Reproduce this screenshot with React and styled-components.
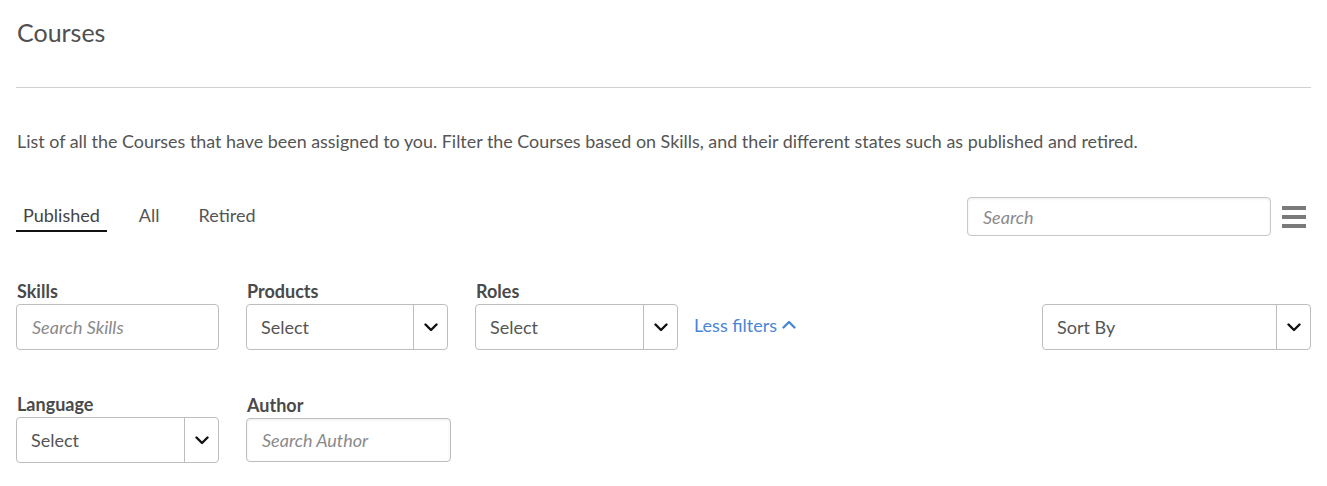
import React from 'react'
import styled, { createGlobalStyle } from 'styled-components'

const GlobalStyle = createGlobalStyle`
  body {
    margin: 0;
    background: #fff;
    font-family: Lato, "Liberation Sans", sans-serif;
    color: #555;
  }
`

const Page = styled.div`
  padding: 16px 16px 0 16px;
`

const Title = styled.h1`
  margin: 0;
  font-size: 25px;
  line-height: 32px;
  font-weight: 400;
  color: #505050;
  padding-left: 1px;
`

const Rule = styled.hr`
  margin: 39px 0 0 0;
  border: none;
  border-top: 1px solid #d0d0d0;
`

const Description = styled.p`
  margin: 41px 0 0 1px;
  font-size: 17.9px;
  line-height: 24px;
  color: #555;
`

const Toolbar = styled.div`
  display: flex;
  align-items: center;
  height: 39px;
  margin-top: 44px;
`

const Tabs = styled.div`
  display: flex;
  align-self: stretch;
  align-items: flex-end;
  gap: 25px;
  padding-bottom: 4px;
`

const Tab = styled.div`
  padding: 0 7px 3px;
  font-size: 18px;
  line-height: 24px;
  color: ${p => (p.$active ? '#444' : '#555')};
  border-bottom: 2px solid ${p => (p.$active ? '#111' : 'transparent')};
  cursor: pointer;
`

const SearchBox = styled.div`
  margin-left: auto;
  height: 37px;
  border: 1px solid #c8c8c8;
  border-radius: 4px;
  box-shadow: inset 0 1px 3px rgba(0, 0, 0, 0.08);
  display: flex;
  align-items: center;
  padding: 0 15px;
  box-sizing: content-box;
  width: 272px;
`

const Placeholder = styled.span`
  font-style: italic;
  font-size: 18px;
  color: #8a8a8a;
`

const MenuButton = styled.div`
  display: flex;
  flex-direction: column;
  gap: 5px;
  margin-left: 11px;
  margin-right: 5px;
  width: 24px;
`

const Bar = styled.span`
  display: block;
  height: 4px;
  background: #7a7a7a;
`

const FilterRow = styled.div`
  display: flex;
  align-items: flex-end;
  gap: 27px;
  margin-top: ${p => p.$top}px;
`

const Field = styled.div`
  display: flex;
  flex-direction: column;
  margin-left: ${p => (p.$push ? 'auto' : '0')};
`

const Label = styled.label`
  font-size: 18px;
  line-height: 20px;
  font-weight: 700;
  color: #4a4a4a;
  margin-bottom: 3px;
  padding-left: 1px;
`

const TextInput = styled.div`
  width: ${p => p.$w}px;
  height: ${p => p.$h || 46}px;
  box-sizing: border-box;
  border: 1px solid #bdbdbd;
  border-radius: 4px;
  display: flex;
  align-items: center;
  padding: 0 15px;
  box-shadow: ${p => (p.$inset ? 'inset 0 1px 3px rgba(0,0,0,0.08)' : 'none')};
  margin-bottom: ${p => (p.$inset ? '1px' : '0')};
`

const Select = styled.div`
  width: ${p => p.$w}px;
  height: 46px;
  box-sizing: border-box;
  border: 1px solid #bdbdbd;
  border-radius: 4px;
  display: flex;
  align-items: stretch;
`

const SelectValue = styled.div`
  flex: 1;
  display: flex;
  align-items: center;
  padding-left: 14px;
  font-size: 18px;
  color: #555;
  border-right: 1px solid #bdbdbd;
`

const Caret = styled.div`
  width: 33px;
  display: flex;
  align-items: center;
  justify-content: center;
`

const LessFilters = styled.a`
  display: flex;
  align-items: center;
  gap: 5px;
  height: 46px;
  margin-left: -11px;
  padding-bottom: 5px;
  box-sizing: border-box;
  font-size: 18px;
  color: #4a86d6;
  text-decoration: none;
  cursor: pointer;
`

const Chevron = ({ up, color = '#111' }) => (
  <svg width="14" height="9" viewBox="0 0 14 9">
    <polyline
      points={up ? '1.5,7.5 7,2 12.5,7.5' : '1.5,1.5 7,7 12.5,1.5'}
      fill="none"
      stroke={color}
      strokeWidth="2.4"
      strokeLinecap="round"
      strokeLinejoin="round"
    />
  </svg>
)

const Dropdown = ({ w, value }) => (
  <Select $w={w}>
    <SelectValue>{value}</SelectValue>
    <Caret>
      <Chevron />
    </Caret>
  </Select>
)

export default function App() {
  return (
    <>
      <GlobalStyle />
      <Page>
        <Title>Courses</Title>
        <Rule />
        <Description>
          List of all the Courses that have been assigned to you. Filter the Courses based on Skills, and their
          different states such as published and retired.
        </Description>

        <Toolbar>
          <Tabs>
            <Tab $active>Published</Tab>
            <Tab>All</Tab>
            <Tab>Retired</Tab>
          </Tabs>
          <SearchBox>
            <Placeholder>Search</Placeholder>
          </SearchBox>
          <MenuButton>
            <Bar />
            <Bar />
            <Bar />
          </MenuButton>
        </Toolbar>

        <FilterRow $top={45}>
          <Field>
            <Label>Skills</Label>
            <TextInput $w={203}>
              <Placeholder>Search Skills</Placeholder>
            </TextInput>
          </Field>
          <Field>
            <Label>Products</Label>
            <Dropdown w={202} value="Select" />
          </Field>
          <Field>
            <Label>Roles</Label>
            <Dropdown w={203} value="Select" />
          </Field>
          <LessFilters>
            Less filters
            <Chevron up color="#4a86d6" />
          </LessFilters>
          <Field $push>
            <Dropdown w={269} value="Sort By" />
          </Field>
        </FilterRow>

        <FilterRow $top={44}>
          <Field>
            <Label>Language</Label>
            <Dropdown w={203} value="Select" />
          </Field>
          <Field>
            <Label>Author</Label>
            <TextInput $w={205} $h={44} $inset>
              <Placeholder>Search Author</Placeholder>
            </TextInput>
          </Field>
        </FilterRow>
      </Page>
    </>
  )
}
